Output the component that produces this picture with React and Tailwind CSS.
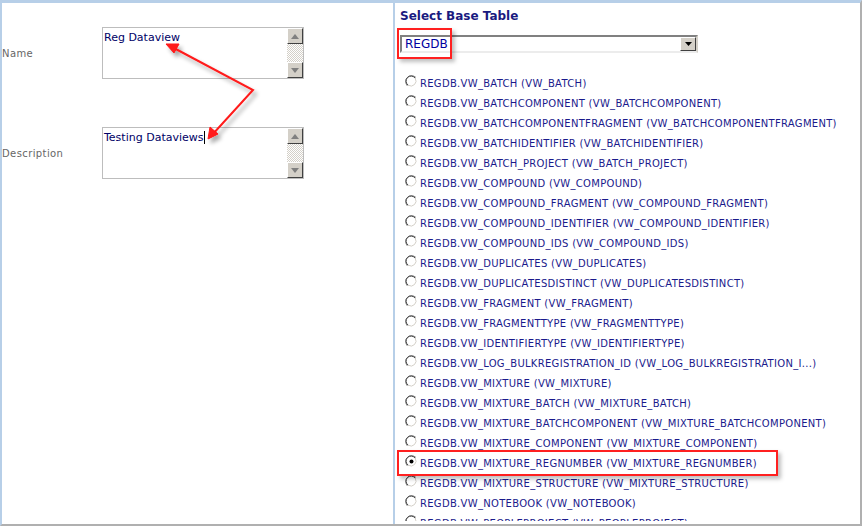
import React from 'react';

const tables = [
  'REGDB.VW_BATCH (VW_BATCH)',
  'REGDB.VW_BATCHCOMPONENT (VW_BATCHCOMPONENT)',
  'REGDB.VW_BATCHCOMPONENTFRAGMENT (VW_BATCHCOMPONENTFRAGMENT)',
  'REGDB.VW_BATCHIDENTIFIER (VW_BATCHIDENTIFIER)',
  'REGDB.VW_BATCH_PROJECT (VW_BATCH_PROJECT)',
  'REGDB.VW_COMPOUND (VW_COMPOUND)',
  'REGDB.VW_COMPOUND_FRAGMENT (VW_COMPOUND_FRAGMENT)',
  'REGDB.VW_COMPOUND_IDENTIFIER (VW_COMPOUND_IDENTIFIER)',
  'REGDB.VW_COMPOUND_IDS (VW_COMPOUND_IDS)',
  'REGDB.VW_DUPLICATES (VW_DUPLICATES)',
  'REGDB.VW_DUPLICATESDISTINCT (VW_DUPLICATESDISTINCT)',
  'REGDB.VW_FRAGMENT (VW_FRAGMENT)',
  'REGDB.VW_FRAGMENTTYPE (VW_FRAGMENTTYPE)',
  'REGDB.VW_IDENTIFIERTYPE (VW_IDENTIFIERTYPE)',
  'REGDB.VW_LOG_BULKREGISTRATION_ID (VW_LOG_BULKREGISTRATION_I...)',
  'REGDB.VW_MIXTURE (VW_MIXTURE)',
  'REGDB.VW_MIXTURE_BATCH (VW_MIXTURE_BATCH)',
  'REGDB.VW_MIXTURE_BATCHCOMPONENT (VW_MIXTURE_BATCHCOMPONENT)',
  'REGDB.VW_MIXTURE_COMPONENT (VW_MIXTURE_COMPONENT)',
  'REGDB.VW_MIXTURE_REGNUMBER (VW_MIXTURE_REGNUMBER)',
  'REGDB.VW_MIXTURE_STRUCTURE (VW_MIXTURE_STRUCTURE)',
  'REGDB.VW_NOTEBOOK (VW_NOTEBOOK)',
  'REGDB.VW_PEOPLEPROJECT (VW_PEOPLEPROJECT)',
];

const font = { fontFamily: '"DejaVu Sans", Verdana, sans-serif' };

function Radio({ checked }) {
  return (
    <svg width="13" height="13" viewBox="0 0 13 13" className="shrink-0">
      <circle cx="6.5" cy="6.5" r="6" fill="#ffffff" />
      <path d="M11 2.5 A6 6 0 1 0 2.5 11" fill="none" stroke="#808080" strokeWidth="1" />
      <path d="M10.2 3.3 A5 5 0 1 0 3.3 10.2" fill="none" stroke="#404040" strokeWidth="1" />
      <path d="M2.5 11 A6 6 0 0 0 11 2.5" fill="none" stroke="#ffffff" strokeWidth="1" />
      <path d="M3.3 10.2 A5 5 0 0 0 10.2 3.3" fill="none" stroke="#d4d0c8" strokeWidth="1" />
      {checked && <circle cx="6.5" cy="6.5" r="2" fill="#000000" />}
    </svg>
  );
}

function ScrollBtn({ up }) {
  return (
    <div className="h-4 w-4 bg-[#d4d0c8] border border-t-white border-l-white border-r-[#404040] border-b-[#404040] flex items-center justify-center">
      <svg width="8" height="5" viewBox="0 0 8 5">
        {up ? <path d="M0 5 L4 0 L8 5 Z" fill="#808080" /> : <path d="M0 0 L4 5 L8 0 Z" fill="#808080" />}
      </svg>
    </div>
  );
}

function TextArea({ value, caret }) {
  return (
    <div className="flex h-[52px] w-[202px] border border-[#bdbdbd] bg-white">
      <div className="flex-1 px-px pt-[3px] text-[11px] leading-[13px] text-[#000066]">
        {value}
        {caret && <span className="inline-block h-[13px] w-px bg-black align-top" />}
      </div>
      <div
        className="flex w-4 flex-col justify-between"
        style={{
          backgroundImage:
            'repeating-conic-gradient(#d4d0c8 0% 25%, #ffffff 0% 50%)',
          backgroundSize: '2px 2px',
        }}
      >
        <ScrollBtn up />
        <ScrollBtn />
      </div>
    </div>
  );
}

export default function App() {
  return (
    <div className="relative h-[526px] w-[862px] overflow-hidden bg-white" style={font}>
      <div className="flex h-full border-t-[3px] border-l-2 border-r-2 border-b-2 border-t-[#b7cfe8] border-l-[#b7cfe8] border-r-[#b0b0b0] border-b-[#b0b0b0]">
        {/* Left pane */}
        <div className="w-[391px] shrink-0 pt-6">
          <div className="flex items-center">
            <div className="w-[100px] text-[10px] text-[#666666] tracking-[0.4px]">Name</div>
            <TextArea value="Reg Dataview" />
          </div>
          <div className="mt-[48px] flex items-center">
            <div className="w-[100px] text-[10px] text-[#666666] tracking-[0.4px]">Description</div>
            <TextArea value="Testing Dataviews" caret />
          </div>
        </div>

        {/* Divider */}
        <div className="w-[2px] shrink-0 bg-[#b7cfe8]" />

        {/* Right pane */}
        <div className="flex h-[518px] flex-1 flex-col overflow-hidden pl-[5px] pt-[6px]">
          <div className="text-[12px] font-bold leading-[15px] text-[#1a1a80]">Select Base Table</div>
          <div className="mt-[11px] flex h-[18px] w-[298px] shrink-0 border-2 border-t-[#808080] border-l-[#808080] border-r-[#d4d0c8] border-b-[#ececec] bg-white">
            <div className="flex-1 pl-[3px] text-[12px] leading-[14px] text-[#0000a0]">REGDB</div>
            <div className="flex h-[14px] w-4 items-center justify-center bg-[#d4d0c8] border border-t-white border-l-white border-r-[#404040] border-b-[#404040]">
              <svg width="7" height="4" viewBox="0 0 7 4">
                <path d="M0 0 L7 0 L3.5 4 Z" fill="#000" />
              </svg>
            </div>
          </div>
          <div className="mt-[22px] flex min-h-0 flex-1 flex-col overflow-hidden">
            {tables.map((t, i) => (
              <div key={t} className="flex h-5 shrink-0 items-start gap-[2px] pl-[5px] whitespace-nowrap">
                <Radio checked={i === 19} />
                <span className="mt-[2px] text-[10px] leading-[14px] tracking-[0.3px] text-[#1a1a8c]">{t}</span>
              </div>
            ))}
          </div>
        </div>
      </div>

      {/* Red highlight boxes */}
      <div className="absolute left-[397px] top-[28px] h-[31px] w-[55px] border-2 border-[#ff2020] shadow-[3px_3px_4px_rgba(0,0,0,0.25)]" />
      <div className="absolute left-[397px] top-[450px] h-[26px] w-[381px] border-2 border-[#ff2020] shadow-[3px_3px_4px_rgba(0,0,0,0.25)]" />

      {/* Arrows */}
      <svg className="absolute left-0 top-0" width="862" height="526" viewBox="0 0 862 526">
        <defs>
          <filter id="sh" x="-20%" y="-20%" width="140%" height="140%">
            <feGaussianBlur in="SourceAlpha" stdDeviation="2" />
            <feOffset dx="3" dy="4" result="b" />
            <feComponentTransfer><feFuncA type="linear" slope="0.35" /></feComponentTransfer>
            <feMerge><feMergeNode /><feMergeNode in="SourceGraphic" /></feMerge>
          </filter>
        </defs>
        <g filter="url(#sh)" stroke="#ff1a1a" strokeWidth="2" fill="#ff1a1a">
          <polyline points="172,47 253,90 212,135" fill="none" />
          <path d="M166 44 L179 44 L174 53 Z" strokeWidth="1" />
          <path d="M208 139 L210 127 L218 134 Z" strokeWidth="1" />
        </g>
      </svg>
    </div>
  );
}
